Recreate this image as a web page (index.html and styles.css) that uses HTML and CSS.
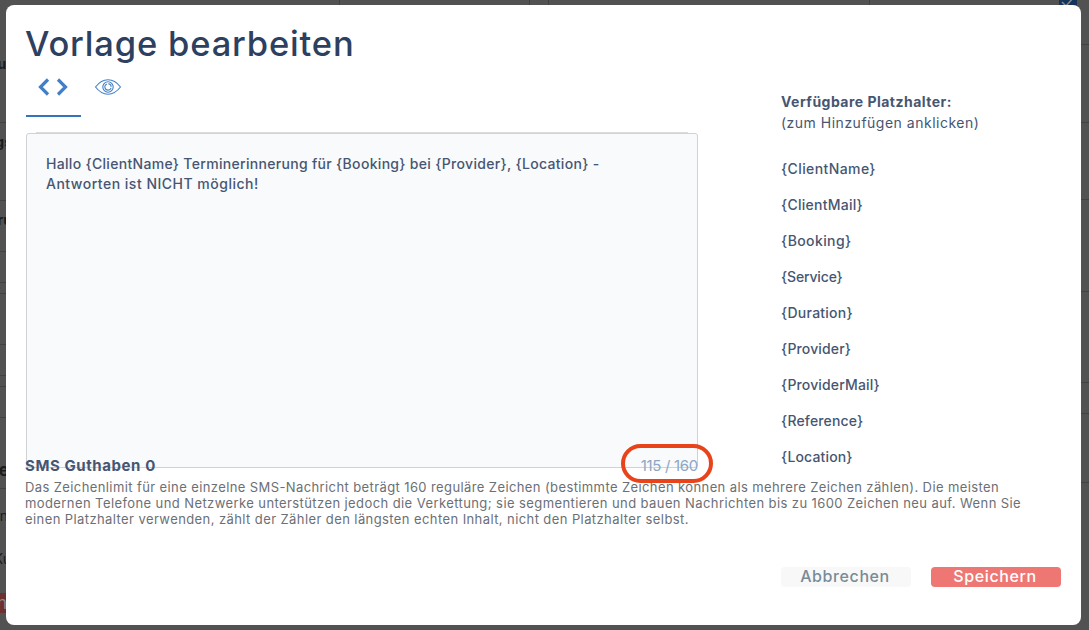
FILE: index.html
```html
<!DOCTYPE html>
<html lang="de">
<head>
  <meta charset="UTF-8" />
  <meta name="viewport" content="width=device-width, initial-scale=1.0"/>
  <title>Vorlage bearbeiten</title>
  <link rel="stylesheet" href="styles.css">
</head>
<body>

  <!-- page behind the modal -->
  <div class="page">
    <div class="page-top">
      <span class="col col-1"></span>
      <span class="col col-2"></span>
      <span class="col col-3"></span>
      <span class="col col-4"></span>
      <span class="page-check">
        <svg width="18" height="10" viewBox="0 0 18 10"><path d="M3 2l4 4 8-9" fill="none" stroke="#8a8a8a" stroke-width="1.500"/></svg>
      </span>
    </div>
    <div class="page-body">
      <div class="strip strip-left">
        <div class="row r1"><b>ur</b></div>
        <div class="row r2"><b>gs</b></div>
        <div class="row r3"><b>ru</b></div>
        <div class="row r4"></div>
        <div class="row r5"></div>
        <div class="row r6"><b>r</b></div>
        <div class="row r7"></div>
        <div class="row r8"></div>
        <div class="row r9"></div>
        <div class="row r10"><b class="big">e</b></div>
        <div class="row r11"><span>n</span></div>
        <div class="row r12"><span>Ku</span></div>
        <div class="row r13"><span class="light">n</span></div>
      </div>
      <div class="strip strip-right">
        <div class="row s1"></div>
        <div class="row s2"></div>
        <div class="row s3"></div>
        <div class="row s4"></div>
        <div class="row s5"></div>
        <div class="row s6"></div>
        <div class="row s7"></div>
      </div>
    </div>
  </div>

  <div class="modal">
    <div class="content">
      <div class="editor">
        <h1>Vorlage bearbeiten</h1>
        <div class="tabs">
          <button class="tab active" aria-label="Code">
            <svg width="32" height="18" viewBox="0 0 32 18" fill="none" stroke="#437fc7" stroke-width="3.200">
              <path d="M11 1.500L3.500 9l7.500 7.500M21 1.500L28.500 9l-7.500 7.500"/>
            </svg>
          </button>
          <button class="tab" aria-label="Vorschau">
            <svg width="28" height="18" viewBox="0 0 28 18" fill="none" stroke="#437fc7" stroke-width="1.100">
              <path d="M1.500 9C5 4.500 9.300 1.800 14 1.800S23 4.500 26.500 9C23 13.500 18.700 16.200 14 16.200S5 13.500 1.500 9z"/>
              <circle cx="14" cy="9" r="5.200"/>
              <path d="M13 5.900A3.200 3.200 0 1 0 17.100 9.800"/>
              <path d="M14.300 5.800A3.200 3.200 0 0 1 17.200 8.700"/>
            </svg>
          </button>
        </div>
        <div class="textbox">Hallo {ClientName} Terminerinnerung für {Booking} bei {Provider}, {Location} -<br><span class="line-2">Antworten ist NICHT möglich!</span></div>
        <div class="meta">
          <strong>SMS Guthaben 0</strong>
          <span class="counter">115 / 160</span>
        </div>
      </div>

      <div class="placeholders">
        <strong>Verfügbare Platzhalter:</strong>
        <p>(zum Hinzufügen anklicken)</p>
        <ul>
          <li class="wide">{ClientName}</li>
          <li>{ClientMail}</li>
          <li class="wide">{Booking}</li>
          <li class="narrow">{Service}</li>
          <li>{Duration}</li>
          <li class="mid">{Provider}</li>
          <li class="mid">{ProviderMail}</li>
          <li class="mid">{Reference}</li>
          <li class="mid">{Location}</li>
        </ul>
      </div>
    </div>

    <p class="hint">
      <span class="hint-1">Das Zeichenlimit für eine einzelne SMS-Nachricht beträgt 160 reguläre Zeichen (bestimmte Zeichen können als mehrere Zeichen zählen). Die meisten</span><br>
      modernen Telefone und Netzwerke unterstützen jedoch die Verkettung; sie segmentieren und bauen Nachrichten bis zu 1600 Zeichen neu auf. Wenn Sie<br>
      einen Platzhalter verwenden, zählt der Zähler den längsten echten Inhalt, nicht den Platzhalter selbst.
    </p>

    <div class="modal-buttons">
      <button class="cancel">Abbrechen</button>
      <button class="save">Speichern</button>
    </div>
  </div>

</body>
</html>
```
FILE: styles.css
```css
*, *::before, *::after {
  box-sizing: border-box;
}
body {
  font-family: 'Inter', sans-serif;
  background: #525252;
  margin: 0;
  height: 630px;
  overflow: hidden;
  color: #465672;
}
h1, p, ul {
  margin: 0;
  padding: 0;
}
button {
  font-family: inherit;
  border: none;
  padding: 0;
  cursor: pointer;
}

/* dimmed page */
.page {
  height: 630px;
}
.page-top {
  display: flex;
  height: 5px;
}
.col {
  border-right: 1px solid #404040;
}
.col-1 { width: 340px; }
.col-2 { width: 190px; }
.col-3 { width: 19px; }
.col-4 { width: 321px; }
.page-check {
  width: 18px;
  height: 10px;
  margin-left: 189px;
  background: #14345c;
}
.page-check svg {
  display: block;
}
.page-body {
  display: flex;
  justify-content: space-between;
}
.strip {
  width: 8px;
}
.row {
  display: flex;
  align-items: center;
  justify-content: flex-end;
  border-bottom: 1px solid #424242;
  font-size: 14px;
  color: #1c1c1c;
  white-space: nowrap;
}
.strip-left .row {
  width: 12px;
}
.r1 { height: 118px; }
.r2 { height: 78px; }
.r3 { height: 51px; }
.r4 { height: 31px; }
.r5 { height: 11px; }
.r6 { height: 51px; }
.r7 { height: 31px; }
.r8 { height: 11px; }
.r9 { height: 31px; }
.r10 { height: 71px; }
.r11 { height: 49px; border: none; }
.r12 { height: 55px; border: none; }
.r13 { height: 20px; background: #6d3030; border: none; }
.r2, .r3 { align-items: flex-start; padding-top: 10px; }
.r6 { align-items: flex-start; padding-top: 10px; }
.r10 { align-items: flex-end; padding: 0 3px 8px 0; }
.r11 { padding: 4px 4px 0 0; }
.r12 { padding: 0 1px 15px 0; }
.r13 { padding-right: 5px; }
.big { font-size: 17px; }
.light { color: #8a8a8a; font-size: 17px; }
.s1 { height: 40px; }
.s2 { height: 78px; }
.s3 { height: 77px; }
.s4 { height: 92px; }
.s5 { height: 91px; }
.s6 { height: 31px; }
.s7 { height: 69px; }

.modal {
  position: fixed;
  top: 5px;
  left: 6px;
  width: 1075px;
  height: 620px;
  padding: 14px 20px 0;
  background: #fff;
  border-radius: 8px;
}
.content {
  display: grid;
  grid-template-columns: 672px 280px;
  column-gap: 83px;
}
h1 {
  margin-left: -1px;
  font-size: 34.5px;
  font-weight: 500;
  line-height: 50px;
  letter-spacing: 0.83px;
  color: #2d4060;
}
.tabs {
  display: flex;
  height: 48px;
}
.tab {
  width: 55px;
  padding: 0 1px 11px 0;
  background: none;
  border-bottom: 2px solid transparent;
}
.tab svg {
  display: block;
  margin: 0 auto;
}
.tab.active {
  border-bottom-color: #3474bd;
}
.textbox {
  position: relative;
  height: 335px;
  margin-top: 16px;
  padding: 20px 19px;
  background: #f9fafc;
  border: 1px solid #d0d2d3;
  border-radius: 3px;
  font-size: 14px;
  font-weight: 500;
  line-height: 20px;
  letter-spacing: 0.31px;
  white-space: nowrap;
}
/* thin second line over the top border */
.textbox::before {
  content: "";
  position: absolute;
  top: -2px;
  left: 9px;
  right: 9px;
  border-top: 1px solid #dcdcdc;
}
.line-2 {
  letter-spacing: 0.5px;
}
.meta {
  position: relative;
  display: flex;
  justify-content: space-between;
  height: 20px;
  margin: -12px 0 0 -1px;
  font-size: 15px;
  line-height: 20px;
}
.meta strong {
  letter-spacing: 0.58px;
}
.counter {
  position: relative;
  color: #8da6c5;
  letter-spacing: -0.3px;
}
.counter::after {
  content: "";
  position: absolute;
  top: -12px;
  right: -15px;
  width: 92px;
  height: 39px;
  border: 4px solid #e9431c;
  border-radius: 20px;
}
.placeholders {
  padding-top: 72px;
  font-size: 14px;
  line-height: 21px;
}
.placeholders strong {
  display: block;
  letter-spacing: 0.48px;
}
.placeholders p {
  letter-spacing: 0.5px;
}
.placeholders ul {
  margin-top: 18px;
  list-style: none;
}
.placeholders li {
  font-weight: 500;
  line-height: 36px;
  letter-spacing: 0.25px;
}
.placeholders .wide {
  letter-spacing: 0.4px;
}
.placeholders .mid {
  letter-spacing: 0.15px;
}
.placeholders .narrow {
  letter-spacing: -0.15px;
}
.hint {
  margin: 3px 0 0 -1px;
  font-size: 13px;
  line-height: 16px;
  letter-spacing: 0.41px;
  color: #6c6f75;
  white-space: nowrap;
}
.hint-1 {
  letter-spacing: 0.395px;
}
.modal-buttons {
  display: flex;
  justify-content: flex-end;
  gap: 20px;
  margin-top: 40px;
}
.modal-buttons button {
  width: 130px;
  height: 20px;
  padding: 0 2px 2px 0;
  border-radius: 4px;
  font-size: 16px;
  font-weight: 500;
  line-height: 18px;
  letter-spacing: 0.6px;
}
.cancel {
  background: #f8f8f8;
  color: #788b97;
}
.save {
  background: #ee7773;
  color: #fff;
}
```
